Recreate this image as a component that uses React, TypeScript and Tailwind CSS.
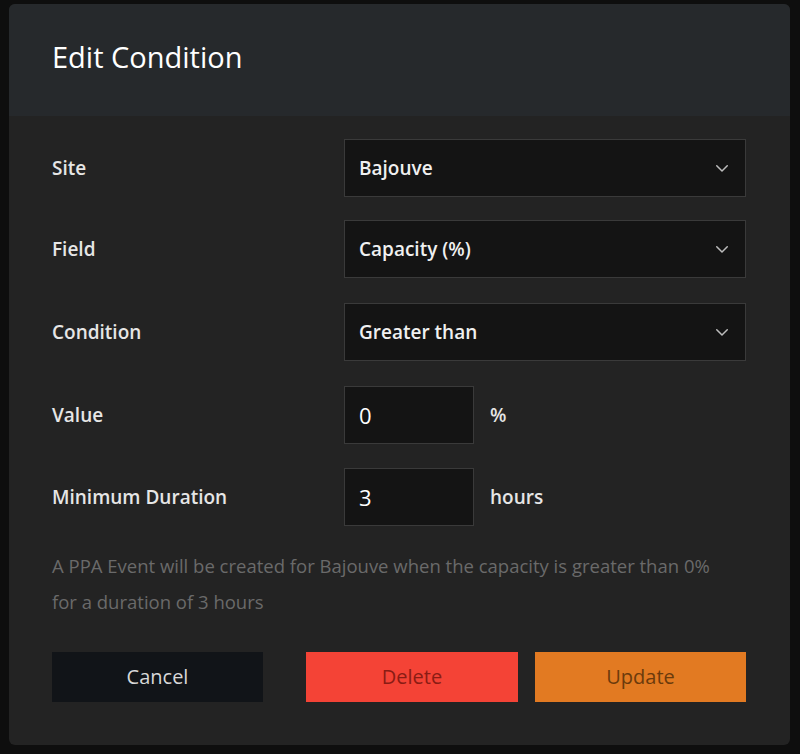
import React from 'react'

function Chevron() {
  return (
    <svg width="18" height="18" viewBox="0 0 24 24" fill="none" stroke="#bdbdbd" strokeWidth="2" strokeLinecap="round" strokeLinejoin="round">
      <path d="M5 9l7 7 7-7" />
    </svg>
  )
}

function Select({ value }: { value: string }) {
  return (
    <div className="flex h-[58px] w-[402px] items-center justify-between border border-[#3a3a3a] bg-[#141414] pl-[14px] pr-[14px] text-[19px] font-semibold text-[#f0f0f0]">
      <span>{value}</span>
      <Chevron />
    </div>
  )
}

function Row({ label, children, mt }: { label: string; children: React.ReactNode; mt: string }) {
  return (
    <div className={`flex items-center ${mt}`}>
      <div className="w-[292px] text-[19px] font-semibold text-[#e6e6e6]">{label}</div>
      {children}
    </div>
  )
}

function NumberBox({ value, unit }: { value: string; unit: string }) {
  return (
    <div className="flex items-center">
      <div className="flex h-[58px] w-[130px] items-center border border-[#3a3a3a] bg-[#141414] pl-[14px] text-[22px] text-white">{value}</div>
      <span className="ml-[16px] text-[19px] font-semibold text-[#e6e6e6]">{unit}</span>
    </div>
  )
}

export default function App() {
  return (
    <div className="h-[754px] w-[800px] bg-[#0e0e0e] pt-[4px] pl-[9px]" style={{ fontFamily: '"Open Sans", "Noto Sans", sans-serif' }}>
      <div className="h-[741px] w-[781px] overflow-hidden rounded-[6px] bg-[#232323]">
        <div className="flex h-[112px] items-center bg-[#26292c] pl-[43px] pb-[6px] text-[29px] text-white">Edit Condition</div>
        <div className="pl-[43px] pr-[43px] pt-[23px]">
          <Row label="Site" mt="">
            <Select value="Bajouve" />
          </Row>
          <Row label="Field" mt="mt-[23px]">
            <Select value="Capacity (%)" />
          </Row>
          <Row label="Condition" mt="mt-[25px]">
            <Select value="Greater than" />
          </Row>
          <Row label="Value" mt="mt-[25px]">
            <NumberBox value="0" unit="%" />
          </Row>
          <Row label="Minimum Duration" mt="mt-[24px]">
            <NumberBox value="3" unit="hours" />
          </Row>
          <p className="mt-[22px] max-w-[670px] text-[18.5px] leading-[36px] text-[#6a6a6a]">
            A PPA Event will be created for Bajouve when the capacity is greater than 0% for a duration of 3 hours
          </p>
          <div className="mt-[32px] flex">
            <button className="h-[50px] w-[211px] bg-[#111418] text-[20px] text-[#d8d8d8]">Cancel</button>
            <button className="ml-[43px] h-[50px] w-[212px] bg-[#f44336] text-[20px] text-[#8a1c14]">Delete</button>
            <button className="ml-[17px] h-[50px] w-[211px] bg-[#e27a22] text-[20px] text-[#6b3a0c]">Update</button>
          </div>
        </div>
      </div>
    </div>
  )
}
